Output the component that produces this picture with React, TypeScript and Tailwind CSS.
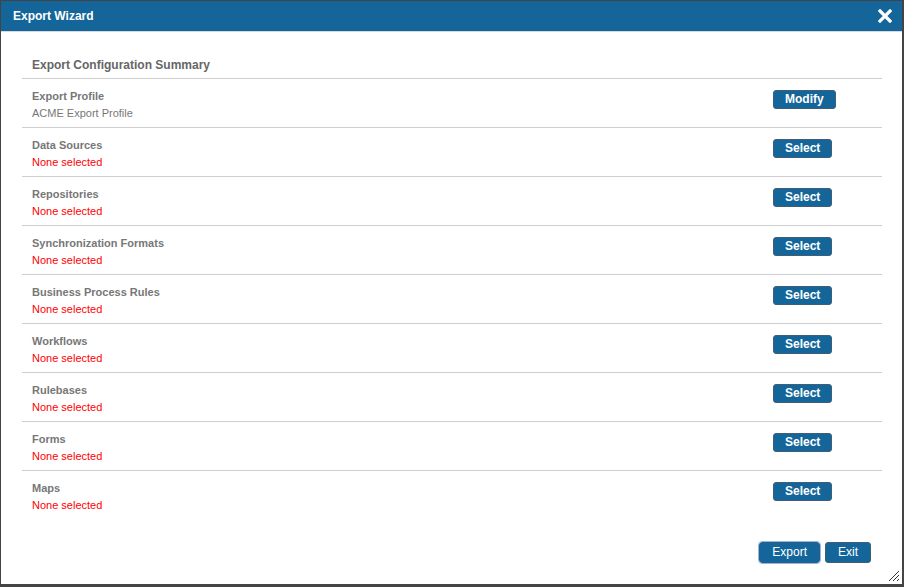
const ROWS = [
  { label: 'Data Sources' },
  { label: 'Repositories' },
  { label: 'Synchronization Formats' },
  { label: 'Business Process Rules' },
  { label: 'Workflows' },
  { label: 'Rulebases' },
  { label: 'Forms' },
  { label: 'Maps' },
]

function WizardButton({ children }: { children: React.ReactNode }) {
  return (
    <button
      type="button"
      className="h-[19px] rounded-[3px] border border-[#3f5f78] bg-[#14669a] px-[11px] text-[12px] font-bold leading-[17px] text-white"
    >
      {children}
    </button>
  )
}

function SummaryRow({
  label,
  value,
  empty,
  action,
}: {
  label: string
  value: string
  empty?: boolean
  action: string
}) {
  return (
    <div className="flex border-t border-[#cfcfcf] pt-[10px] pb-[7px] pl-[10px]">
      <div className="flex-1">
        <div className="text-[11px] font-bold leading-[14px] text-[#777]">{label}</div>
        <div
          className={
            empty
              ? 'mt-[3px] text-[11px] leading-[14px] text-[#ff0000]'
              : 'mt-[3px] text-[11px] leading-[14px] text-[#777]'
          }
        >
          {value}
        </div>
      </div>
      <div className="flex w-[109px] items-start pt-px">
        <WizardButton>{action}</WizardButton>
      </div>
    </div>
  )
}

export default function App() {
  return (
    <div
      className="h-[587px] w-[904px] bg-[#444] pt-px pr-[2px] pb-[3px] pl-px"
      style={{ fontFamily: '"Liberation Sans", Arial, sans-serif' }}
    >
      <div className="relative flex h-full flex-col bg-white">
        <div className="flex h-[31px] items-center justify-between border-b border-[#d9d9d9] bg-[#14669a] pr-[10px] pl-[12px]">
          <span className="text-[12px] font-bold text-white">Export Wizard</span>
          <svg width="14" height="14" viewBox="0 0 14 14" className="mt-[-1px]">
            <path d="M2 2L12 12M12 2L2 12" stroke="#fff" strokeWidth="3.2" strokeLinecap="square" />
          </svg>
        </div>

        <div className="mt-[26px] mr-[20px] ml-[21px]">
          <div className="pb-[6px] pl-[10px] text-[12px] font-bold leading-[14px] text-[#666]">
            Export Configuration Summary
          </div>
          <SummaryRow label="Export Profile" value="ACME Export Profile" action="Modify" />
          {ROWS.map(row => (
            <SummaryRow key={row.label} label={row.label} value="None selected" empty action="Select" />
          ))}
        </div>

        <div className="mt-[23px] flex justify-end gap-[5px] pr-[31px]">
          <button
            type="button"
            className="h-[21px] rounded-[3px] border border-[#2c5d86] bg-[#14669a] px-[12px] text-[12px] leading-[19px] text-white outline outline-1 outline-[#8fb8e6]"
          >
            Export
          </button>
          <button
            type="button"
            className="h-[21px] rounded-[3px] border border-[#3f5f78] bg-[#14669a] px-[12px] text-[12px] leading-[19px] text-white"
          >
            Exit
          </button>
        </div>

        <svg width="12" height="12" viewBox="0 0 12 12" className="absolute right-[2px] bottom-[2px]">
          <path d="M11 1L1 11M11 5L5 11M11 9L9 11" stroke="#333" strokeWidth="1" />
        </svg>
      </div>
    </div>
  )
}
